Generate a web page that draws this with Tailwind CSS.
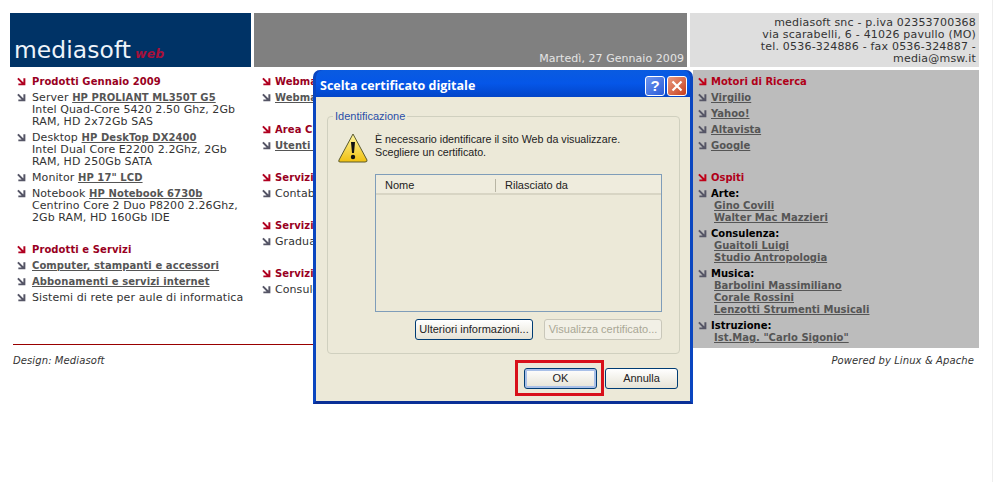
<!DOCTYPE html>
<html lang="en">
<head>
    <meta charset="UTF-8">
    <meta name="viewport" content="width=device-width, initial-scale=1.0">
    <title>Mediasoft</title>
    <script src="https://cdn.jsdelivr.net/npm/@tailwindcss/browser@4"></script>
</head>
<body class="bg-white">
    <svg width="0" height="0" class="absolute">
        <symbol id="arrow" viewBox="0 0 10 10">
            <path d="M1 1.5 L7.500 8 M1.500 8.200 H8.200 V1.500" fill="none" stroke="currentColor" stroke-width="2.200"/>
        </symbol>
    </svg>

    <div class="relative w-[993px] h-[482px] overflow-hidden border-r border-[#eeeeee] pt-[13px] pl-[10px] font-['DejaVu_Sans',sans-serif] text-[11px] leading-[12px] tracking-[0.08px] text-[#333333]">
        <!-- Header -->
        <div class="grid grid-cols-[241px_433px_289px] gap-x-[3px] h-[54px]">
            <div class="bg-[#003366] flex items-end pl-[4px] pb-[2px]">
                <span class="text-[23.4px] leading-[30px] text-[#eef4fa]">mediasoft</span>
                <span class="ml-[4px] mb-[3px] text-[12.5px] leading-[16px] font-bold italic text-[#a8103a]">web</span>
            </div>
            <div class="bg-[#808080] flex items-end justify-end pr-[3px] pb-[2px] tracking-[0.05px] text-[#e4e4e4]">Martedì, 27 Gennaio 2009</div>
            <div class="bg-[#dedede] flex items-end justify-end text-right pr-[3px] pb-[2px] tracking-[0.2px]">
                <p>mediasoft snc - p.iva 02353700368<br>via scarabelli, 6 - 41026 pavullo (MO)<br>tel. 0536-324886 - fax 0536-324887 -<br>media@msw.it</p>
            </div>
        </div>

        <!-- Content -->
        <div class="grid grid-cols-[680px_286px] gap-x-[3px] mt-[3px]">
            <div class="h-[275px] ml-[3px] border-b border-[#990000] grid grid-cols-[244px_1fr]">
                <!-- Left column -->
                <div class="pt-[6px] pl-[4px] flex flex-col gap-y-[4px]">
                    <div class="flex gap-x-[6px]"><svg class="w-[9px] h-[9px] mt-[1px] text-[#b00020]"><use href="#arrow"/></svg><b class="text-[10px] text-[#990022]">Prodotti Gennaio 2009</b></div>
                    <div class="flex gap-x-[6px]"><svg class="w-[9px] h-[9px] shrink-0 mt-[1px] text-[#555566]"><use href="#arrow"/></svg><p class="w-[215px]">Server <a class="text-[10px] font-bold underline text-[#555555]">HP PROLIANT ML350T G5</a><br>Intel Quad-Core 5420 2.50 Ghz, 2Gb RAM, HD 2x72Gb SAS</p></div>
                    <div class="flex gap-x-[6px]"><svg class="w-[9px] h-[9px] shrink-0 mt-[1px] text-[#555566]"><use href="#arrow"/></svg><p class="w-[215px]">Desktop <a class="text-[10px] font-bold underline text-[#555555]">HP DeskTop DX2400</a><br>Intel Dual Core E2200 2.2Ghz, 2Gb RAM, HD 250Gb SATA</p></div>
                    <div class="flex gap-x-[6px]"><svg class="w-[9px] h-[9px] shrink-0 mt-[1px] text-[#555566]"><use href="#arrow"/></svg><p>Monitor <a class="text-[10px] font-bold underline text-[#555555]">HP 17" LCD</a></p></div>
                    <div class="flex gap-x-[6px]"><svg class="w-[9px] h-[9px] shrink-0 mt-[1px] text-[#555566]"><use href="#arrow"/></svg><p class="w-[215px]">Notebook <a class="text-[10px] font-bold underline text-[#555555]">HP Notebook 6730b</a><br>Centrino Core 2 Duo P8200 2.26Ghz, 2Gb RAM, HD 160Gb IDE</p></div>
                    <div class="flex gap-x-[6px] mt-[16px]"><svg class="w-[9px] h-[9px] mt-[1px] text-[#b00020]"><use href="#arrow"/></svg><b class="text-[10px] text-[#990022]">Prodotti e Servizi</b></div>
                    <div class="flex gap-x-[6px]"><svg class="w-[9px] h-[9px] mt-[1px] text-[#555566]"><use href="#arrow"/></svg><a class="text-[10px] font-bold underline text-[#555555]">Computer, stampanti e accessori</a></div>
                    <div class="flex gap-x-[6px]"><svg class="w-[9px] h-[9px] mt-[1px] text-[#555566]"><use href="#arrow"/></svg><a class="text-[10px] font-bold underline text-[#555555]">Abbonamenti e servizi internet</a></div>
                    <div class="flex gap-x-[6px]"><svg class="w-[9px] h-[9px] mt-[1px] text-[#555566]"><use href="#arrow"/></svg><span>Sistemi di rete per aule di informatica</span></div>
                </div>
                <!-- Middle column, cut off by the dialog -->
                <div class="w-[57px] overflow-hidden whitespace-nowrap pt-[6px] pl-[5px] flex flex-col gap-y-[4px]">
                    <div class="flex gap-x-[4px]"><svg class="w-[9px] h-[9px] shrink-0 mt-[1px] text-[#b00020]"><use href="#arrow"/></svg><b class="text-[10px] text-[#990022]">Webmail</b></div>
                    <div class="flex gap-x-[4px]"><svg class="w-[9px] h-[9px] shrink-0 mt-[1px] text-[#555566]"><use href="#arrow"/></svg><a class="text-[10px] font-bold underline text-[#555555]">Webmail</a></div>
                    <div class="flex gap-x-[4px] mt-[16px]"><svg class="w-[9px] h-[9px] shrink-0 mt-[1px] text-[#b00020]"><use href="#arrow"/></svg><b class="text-[10px] text-[#990022]">Area Clienti</b></div>
                    <div class="flex gap-x-[4px]"><svg class="w-[9px] h-[9px] shrink-0 mt-[1px] text-[#555566]"><use href="#arrow"/></svg><a class="text-[10px] font-bold underline text-[#555555]">Utenti registrati</a></div>
                    <div class="flex gap-x-[4px] mt-[16px]"><svg class="w-[9px] h-[9px] shrink-0 mt-[1px] text-[#b00020]"><use href="#arrow"/></svg><b class="text-[10px] text-[#990022]">Servizi</b></div>
                    <div class="flex gap-x-[4px]"><svg class="w-[9px] h-[9px] shrink-0 mt-[1px] text-[#555566]"><use href="#arrow"/></svg><span>Contabilità</span></div>
                    <div class="flex gap-x-[4px] mt-[16px]"><svg class="w-[9px] h-[9px] shrink-0 mt-[1px] text-[#b00020]"><use href="#arrow"/></svg><b class="text-[10px] text-[#990022]">Servizi</b></div>
                    <div class="flex gap-x-[4px]"><svg class="w-[9px] h-[9px] shrink-0 mt-[1px] text-[#555566]"><use href="#arrow"/></svg><span>Graduatorie</span></div>
                    <div class="flex gap-x-[4px] mt-[16px]"><svg class="w-[9px] h-[9px] shrink-0 mt-[1px] text-[#b00020]"><use href="#arrow"/></svg><b class="text-[10px] text-[#990022]">Servizi</b></div>
                    <div class="flex gap-x-[4px]"><svg class="w-[9px] h-[9px] shrink-0 mt-[1px] text-[#555566]"><use href="#arrow"/></svg><span>Consulenza</span></div>
                </div>
            </div>

            <!-- Right column -->
            <div class="h-[278px] bg-[#bcbcbc] pt-[6px] pl-[5px] flex flex-col gap-y-[4px] tracking-normal">
                <div class="flex gap-x-[4px]"><svg class="w-[9px] h-[9px] mt-[1px] text-[#c00018]"><use href="#arrow"/></svg><b class="text-[10px] text-[#b00018]">Motori di Ricerca</b></div>
                <div class="flex gap-x-[4px]"><svg class="w-[9px] h-[9px] mt-[1px] text-[#555566]"><use href="#arrow"/></svg><a class="text-[10px] font-bold underline text-[#555555]">Virgilio</a></div>
                <div class="flex gap-x-[4px]"><svg class="w-[9px] h-[9px] mt-[1px] text-[#555566]"><use href="#arrow"/></svg><a class="text-[10px] font-bold underline text-[#555555]">Yahoo!</a></div>
                <div class="flex gap-x-[4px]"><svg class="w-[9px] h-[9px] mt-[1px] text-[#555566]"><use href="#arrow"/></svg><a class="text-[10px] font-bold underline text-[#555555]">Altavista</a></div>
                <div class="flex gap-x-[4px]"><svg class="w-[9px] h-[9px] mt-[1px] text-[#555566]"><use href="#arrow"/></svg><a class="text-[10px] font-bold underline text-[#555555]">Google</a></div>
                <div class="flex gap-x-[4px] mt-[16px]"><svg class="w-[9px] h-[9px] mt-[1px] text-[#c00018]"><use href="#arrow"/></svg><b class="text-[10px] text-[#b00018]">Ospiti</b></div>
                <div class="flex gap-x-[4px]"><svg class="w-[9px] h-[9px] mt-[1px] text-[#555566]"><use href="#arrow"/></svg><div><b class="block text-[10px] text-black">Arte:</b><a class="block ml-[3px] text-[10px] font-bold underline text-[#555555]">Gino Covili</a><a class="block ml-[3px] text-[10px] font-bold underline text-[#555555]">Walter Mac Mazzieri</a></div></div>
                <div class="flex gap-x-[4px]"><svg class="w-[9px] h-[9px] mt-[1px] text-[#555566]"><use href="#arrow"/></svg><div><b class="block text-[10px] text-black">Consulenza:</b><a class="block ml-[3px] text-[10px] font-bold underline text-[#555555]">Guaitoli Luigi</a><a class="block ml-[3px] text-[10px] font-bold underline text-[#555555]">Studio Antropologia</a></div></div>
                <div class="flex gap-x-[4px]"><svg class="w-[9px] h-[9px] mt-[1px] text-[#555566]"><use href="#arrow"/></svg><div><b class="block text-[10px] text-black">Musica:</b><a class="block ml-[3px] text-[10px] font-bold underline text-[#555555]">Barbolini Massimiliano</a><a class="block ml-[3px] text-[10px] font-bold underline text-[#555555]">Corale Rossini</a><a class="block ml-[3px] text-[10px] font-bold underline text-[#555555]">Lenzotti Strumenti Musicali</a></div></div>
                <div class="flex gap-x-[4px]"><svg class="w-[9px] h-[9px] mt-[1px] text-[#555566]"><use href="#arrow"/></svg><div><b class="block text-[10px] text-black">Istruzione:</b><a class="block ml-[3px] text-[10px] font-bold underline text-[#555555]">Ist.Mag. "Carlo Sigonio"</a></div></div>
            </div>
        </div>

        <!-- Footer -->
        <div class="flex justify-between w-[964px] pl-[3px] mt-[7px] text-[10px] italic tracking-[0.1px]">
            <span>Design: Mediasoft</span>
            <span>Powered by Linux &amp; Apache</span>
        </div>

        <!-- Certificate dialog -->
        <div class="absolute left-[313px] top-[70px] w-[380px] h-[334px] flex flex-col rounded-t-[7px] bg-[#0a3fc0] border-x-[3px] border-b-[3px] border-x-[#0a46c0] border-b-[#0a2f96] font-['Liberation_Sans',sans-serif] tracking-normal">
            <div class="h-[27px] shrink-0 flex items-center justify-between pt-[4px] pl-[4px] pr-[3px] rounded-t-[7px] bg-gradient-to-b from-[#0a5be0] via-[#0556e8] to-[#0345c8]">
                <span class="font-['Open_Sans',sans-serif] font-bold text-[12.5px] text-white">Scelta certificato digitale</span>
                <div class="flex gap-x-[2px]">
                    <div class="w-[20px] h-[20px] rounded-[3px] border border-white bg-gradient-to-br from-[#6f95ee] to-[#2a5bd8] flex items-center justify-center font-bold text-[15px] text-white">?</div>
                    <div class="w-[20px] h-[20px] rounded-[3px] border border-white bg-gradient-to-br from-[#e89a80] to-[#c63a14] flex items-center justify-center">
                        <svg width="12" height="12" viewBox="0 0 12 12"><path d="M1.500 1.500 L10.500 10.500 M10.500 1.500 L1.500 10.500" stroke="white" stroke-width="2.200"/></svg>
                    </div>
                </div>
            </div>
            <div class="relative flex-1 bg-[#ece9d8] px-[11px] pt-[19px] text-[11px] leading-[13px] text-[#222222]">
                <!-- Group box -->
                <div class="relative h-[238px] w-[353px] rounded-[4px] border border-[#d0d0bf]">
                    <span class="absolute left-[5px] -top-[7px] px-[2px] bg-[#ece9d8] text-[#2a4fa8]">Identificazione</span>
                    <div class="flex gap-x-[6px] pl-[9px] pt-[15px]">
                        <svg width="32" height="32" viewBox="0 0 32 32" class="shrink-0">
                            <defs><linearGradient id="warn" x1="0" y1="0" x2="0" y2="1"><stop offset="0" stop-color="#fff6a0"/><stop offset="1" stop-color="#f0c010"/></linearGradient></defs>
                            <path d="M16 2 L30 28 Q30.500 30 28 30 H3 Q1 30 2 28 Z" fill="url(#warn)" stroke="#5a5a30" stroke-width="1" stroke-linejoin="round"/>
                            <path d="M14 10 H18 L17 21 H15 Z" fill="#111111"/>
                            <circle cx="16" cy="25" r="2.200" fill="#111111"/>
                        </svg>
                        <p class="text-[10.7px] pt-px">È necessario identificare il sito Web da visualizzare.<br>Scegliere un certificato.</p>
                    </div>
                    <!-- Certificate list -->
                    <div class="ml-[47px] mt-[10px] w-[287px] h-[138px] border border-[#7f9db9] bg-[#ece9d8]">
                        <div class="flex h-[20px] items-center pt-[2px] border-b-2 border-[#d8d5c4] bg-[#efecdd]">
                            <span class="w-[120px] pl-[9px] border-r border-[#b8b5a4]">Nome</span>
                            <span class="pl-[9px]">Rilasciato da</span>
                        </div>
                    </div>
                    <div class="flex justify-end gap-x-[11px] mr-[17px] mt-[7px]">
                        <div class="w-[118px] h-[21px] flex items-center justify-center rounded-[3px] border border-[#003c74] bg-gradient-to-b from-[#ffffff] to-[#e6e3d6]">Ulteriori informazioni...</div>
                        <div class="w-[118px] h-[21px] flex items-center justify-center rounded-[3px] border border-[#c9c7ba] bg-[#f2f0e6] text-[#a9a795]">Visualizza certificato...</div>
                    </div>
                </div>
                <!-- Dialog buttons -->
                <div class="flex justify-end gap-x-[8px] w-[351px] mt-[14px]">
                    <div class="w-[73px] h-[21px] flex items-center justify-center rounded-[3px] border border-[#003c74] bg-gradient-to-b from-[#ffffff] to-[#e6e3d6] shadow-[inset_0_0_0_2px_#a9c0e8]">OK</div>
                    <div class="w-[73px] h-[21px] flex items-center justify-center rounded-[3px] border border-[#003c74] bg-gradient-to-b from-[#ffffff] to-[#e6e3d6]">Annulla</div>
                </div>
                <!-- Highlight around OK -->
                <div class="absolute left-[199px] top-[263px] w-[89px] h-[36px] border-[3px] border-[#d8101a]"></div>
            </div>
        </div>
    </div>
</body>
</html>
